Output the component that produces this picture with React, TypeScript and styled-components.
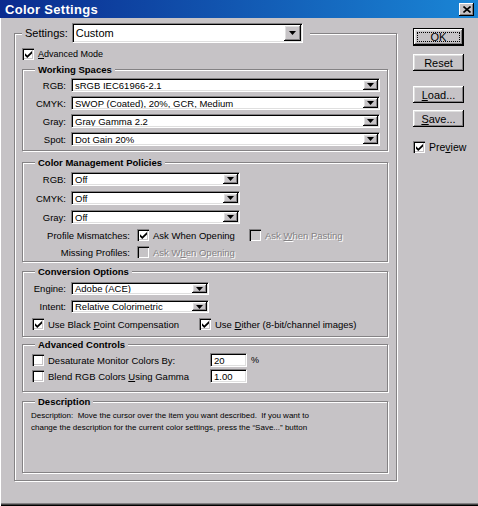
import React from 'react';
import styled, { createGlobalStyle, css } from 'styled-components';

const FACE = '#c6c3c6';
const SHADOW = '#848284';
const UI_FONT = `"Liberation Sans", Arial, sans-serif`;

const GlobalStyle = createGlobalStyle`
  html, body {
    margin: 0;
    padding: 0;
    background: ${FACE};
  }
  body {
    font-family: ${UI_FONT};
    color: #000;
  }
  * {
    box-sizing: border-box;
  }
`;

const Window = styled.div`
  width: 478px;
  height: 506px;
  background: ${FACE};
  display: flex;
  flex-direction: column;
  box-shadow: inset 0 -1px 0 #000, inset 0 -2px 0 #424142, inset 0 -3px 0 ${SHADOW};
`;

const TitleBar = styled.div`
  height: 18px;
  flex: none;
  display: flex;
  align-items: center;
  justify-content: space-between;
  padding: 0 4px 0 5px;
  background: linear-gradient(90deg, #0a2a8e 0%, #1a86d6 100%);
`;

const Title = styled.span`
  color: #fff;
  font-weight: bold;
  font-size: 13px;
  letter-spacing: 0.3px;
`;

const CloseButton = styled.div`
  width: 15px;
  height: 13px;
  background: ${FACE};
  display: flex;
  align-items: center;
  justify-content: center;
  box-shadow: inset -1px -1px 0 #000, inset 1px 1px 0 #fff, inset -2px -2px 0 ${SHADOW};
`;

const Body = styled.div`
  flex: 1;
  display: flex;
  align-items: flex-start;
  gap: 16px;
  padding: 5px 0 0 13px;
  border-left: 1px solid #fff;
`;

const etched = css`
  margin: 0;
  border: 1px solid ${SHADOW};
  box-shadow: 1px 1px 0 #fff, inset 1px 1px 0 #fff;
`;

const OuterGroup = styled.fieldset`
  ${etched};
  width: 383px;
  height: 458px;
  padding: 5px 8px 7px 7px;
  display: flex;
  flex-direction: column;
  gap: 4px;
`;

const SettingsLegend = styled.legend`
  padding: 0 7px 0 3px;
  display: flex;
  align-items: center;
  gap: 4px;
  background: ${FACE};
  font-size: 11px;
`;

const Group = styled.fieldset<{ $pt: number; $pb: number; $gap: number; $mt?: number; $grow?: boolean }>`
  ${etched};
  margin-top: ${p => p.$mt ?? 0}px;
  padding: ${p => p.$pt}px 7px ${p => p.$pb}px 7px;
  display: flex;
  flex-direction: column;
  gap: ${p => p.$gap}px;
  ${p => p.$grow && css`flex: 1;`}
`;

const GroupTitle = styled.legend`
  margin-left: 5px;
  padding: 0 3px;
  background: ${FACE};
  font-weight: bold;
  font-size: 9.5px;
  line-height: 11px;
`;

const Row = styled.div<{ $indent?: number }>`
  display: flex;
  align-items: center;
  padding-left: ${p => p.$indent ?? 0}px;
`;

const FieldLabel = styled.span<{ $w: number; $gap?: number }>`
  width: ${p => p.$w}px;
  flex: none;
  margin-right: ${p => p.$gap ?? 5}px;
  text-align: right;
  font-size: 9.5px;
  white-space: nowrap;
`;

const sunken = css`
  background: #fff;
  border-top: 1px solid ${SHADOW};
  border-left: 1px solid ${SHADOW};
  border-right: 1px solid #fff;
  border-bottom: 1px solid #fff;
  box-shadow: inset 1px 1px 0 #000, inset -1px -1px 0 #dfdfdf;
`;

const raised = css`
  background: ${FACE};
  box-shadow: inset -1px -1px 0 #000, inset 1px 1px 0 #fff, inset -2px -2px 0 ${SHADOW}, inset 2px 2px 0 #dfdfdf;
`;

const SelectBox = styled.div<{ $w?: number; $h?: number }>`
  ${sunken};
  display: flex;
  height: ${p => p.$h ?? 14}px;
  padding: 1px;
  ${p => (p.$w ? css`width: ${p.$w}px; flex: none;` : css`flex: 1;`)}
`;

const SelectText = styled.span<{ $size?: number }>`
  flex: 1;
  display: flex;
  align-items: center;
  padding-left: 2px;
  font-size: ${p => p.$size ?? 9.5}px;
  white-space: nowrap;
  overflow: hidden;
`;

const SelectArrow = styled.span<{ $w?: number }>`
  ${raised};
  width: ${p => p.$w ?? 15}px;
  flex: none;
  display: flex;
  align-items: center;
  justify-content: center;
`;

const Box = styled.span<{ $disabled?: boolean }>`
  width: 12px;
  height: 12px;
  flex: none;
  display: flex;
  align-items: center;
  justify-content: center;
  background: ${p => (p.$disabled ? FACE : '#fff')};
  box-shadow: inset 1px 1px 0 ${SHADOW}, inset 2px 2px 0 #000, inset -1px -1px 0 #fff, inset -2px -2px 0 ${FACE};
`;

const CheckItem = styled.span<{ $w?: number; $disabled?: boolean; $size?: number }>`
  display: flex;
  align-items: center;
  gap: 4px;
  flex: none;
  width: ${p => (p.$w ? `${p.$w}px` : 'auto')};
  font-size: ${p => p.$size ?? 9.5}px;
  white-space: nowrap;
  color: ${p => (p.$disabled ? SHADOW : '#000')};
  text-shadow: ${p => (p.$disabled ? '1px 1px 0 #fff' : 'none')};
`;

const NumberField = styled.div`
  ${sunken};
  width: 37px;
  height: 14px;
  display: flex;
  align-items: center;
  padding-left: 3px;
  font-size: 9.5px;
`;

const Unit = styled.span`
  margin-left: 4px;
  font-size: 9px;
`;

const DescText = styled.p`
  margin: 3px 0 0 1px;
  font-size: 8px;
  line-height: 12px;
`;

const Side = styled.div`
  width: 51px;
  display: flex;
  flex-direction: column;
  padding-top: 5px;
`;

const Button = styled.div<{ $mt?: number; $h?: number; $primary?: boolean }>`
  ${raised};
  margin-top: ${p => p.$mt ?? 0}px;
  height: ${p => p.$h ?? 17}px;
  display: flex;
  align-items: center;
  justify-content: center;
  font-size: 11px;
  ${p =>
    p.$primary &&
    css`
      border: 1px solid #000;
      padding: 3px;
    `}
`;

const FocusRing = styled.span`
  flex: 1;
  align-self: stretch;
  display: flex;
  align-items: center;
  justify-content: center;
  border: 1px dotted #000;
`;

const SideCheck = styled.div`
  margin-top: 14px;
`;

const Arrow = () => (
  <svg width="7" height="4" viewBox="0 0 7 4">
    <polygon points="0,0 7,0 3.5,4" fill="#000" />
  </svg>
);

const CheckMark = () => (
  <svg width="7" height="7" viewBox="0 0 7 7">
    <path d="M0 2.2 L2.3 4.4 L7 0 L7 2.6 L2.3 7 L0 4.8 Z" fill="#000" />
  </svg>
);

const Check: React.FC<{ on?: boolean; disabled?: boolean }> = ({ on, disabled }) => (
  <Box $disabled={disabled}>{on && <CheckMark />}</Box>
);

const Select: React.FC<{ value: string; w?: number; h?: number; size?: number; arrowW?: number }> = ({
  value,
  w,
  h,
  size,
  arrowW,
}) => (
  <SelectBox $w={w} $h={h}>
    <SelectText $size={size}>{value}</SelectText>
    <SelectArrow $w={arrowW}>
      <Arrow />
    </SelectArrow>
  </SelectBox>
);

export default function App() {
  return (
    <>
      <GlobalStyle />
      <Window>
        <TitleBar>
          <Title>Color Settings</Title>
          <CloseButton>
            <svg width="8" height="7" viewBox="0 0 8 7">
              <path d="M0.5 0.5 L7.5 6.5 M7.5 0.5 L0.5 6.5" stroke="#000" strokeWidth="1.6" />
            </svg>
          </CloseButton>
        </TitleBar>

        <Body>
          <OuterGroup>
            <SettingsLegend>
              <span>Settings:</span>
              <Select value="Custom" w={231} h={20} size={11} arrowW={17} />
            </SettingsLegend>

            <Row>
              <CheckItem $size={9}>
                <Check on />
                <span>
                  <u>A</u>dvanced Mode
                </span>
              </CheckItem>
            </Row>

            <Group $pt={3} $pb={4} $gap={4}>
              <GroupTitle>Working Spaces</GroupTitle>
              <Row>
                <FieldLabel $w={36}>RGB:</FieldLabel>
                <Select value="sRGB IEC61966-2.1" />
              </Row>
              <Row>
                <FieldLabel $w={36}>CMYK:</FieldLabel>
                <Select value="SWOP (Coated), 20%, GCR, Medium" />
              </Row>
              <Row>
                <FieldLabel $w={36}>Gray:</FieldLabel>
                <Select value="Gray Gamma 2.2" />
              </Row>
              <Row>
                <FieldLabel $w={36}>Spot:</FieldLabel>
                <Select value="Dot Gain 20%" />
              </Row>
            </Group>

            <Group $pt={4} $pb={3} $gap={5} $mt={2}>
              <GroupTitle>Color Management Policies</GroupTitle>
              <Row>
                <FieldLabel $w={36}>RGB:</FieldLabel>
                <Select value="Off" w={169} />
              </Row>
              <Row>
                <FieldLabel $w={36}>CMYK:</FieldLabel>
                <Select value="Off" w={169} />
              </Row>
              <Row>
                <FieldLabel $w={36}>Gray:</FieldLabel>
                <Select value="Off" w={169} />
              </Row>
              <Row>
                <FieldLabel $w={100} $gap={7}>
                  Profile Mismatches:
                </FieldLabel>
                <CheckItem $w={112}>
                  <Check on />
                  <span>Ask When Opening</span>
                </CheckItem>
                <CheckItem $disabled>
                  <Check disabled />
                  <span>
                    Ask <u>W</u>hen Pasting
                  </span>
                </CheckItem>
              </Row>
              <Row>
                <FieldLabel $w={100} $gap={7}>
                  Missing Profiles:
                </FieldLabel>
                <CheckItem $disabled>
                  <Check disabled />
                  <span>
                    Ask W<u>h</u>en Opening
                  </span>
                </CheckItem>
              </Row>
            </Group>

            <Group $pt={5} $pb={6} $gap={5}>
              <GroupTitle>Conversion Options</GroupTitle>
              <Row>
                <FieldLabel $w={36}>Engine:</FieldLabel>
                <Select value="Adobe (ACE)" w={138} h={13} />
              </Row>
              <Row>
                <FieldLabel $w={36}>Intent:</FieldLabel>
                <Select value="Relative Colorimetric" w={138} h={13} />
              </Row>
              <Row $indent={2}>
                <CheckItem $w={167}>
                  <Check on />
                  <span>
                    Use Black <u>P</u>oint Compensation
                  </span>
                </CheckItem>
                <CheckItem>
                  <Check on />
                  <span>
                    Use <u>D</u>ither (8-bit/channel images)
                  </span>
                </CheckItem>
              </Row>
            </Group>

            <Group $pt={3} $pb={8} $gap={2} $mt={-2}>
              <GroupTitle>Advanced Controls</GroupTitle>
              <Row $indent={2}>
                <CheckItem $w={178}>
                  <Check />
                  <span>Desaturate Monitor Colors By:</span>
                </CheckItem>
                <NumberField>20</NumberField>
                <Unit>%</Unit>
              </Row>
              <Row $indent={2}>
                <CheckItem $w={178}>
                  <Check />
                  <span>
                    Blend RGB Colors <u>U</u>sing Gamma
                  </span>
                </CheckItem>
                <NumberField>1.00</NumberField>
              </Row>
            </Group>

            <Group $pt={0} $pb={4} $gap={0} $grow>
              <GroupTitle>Description</GroupTitle>
              <DescText>
                Description:&nbsp; Move the cursor over the item you want described.&nbsp; If you want to
                <br />
                change the description for the current color settings, press the “Save...” button
              </DescText>
            </Group>
          </OuterGroup>

          <Side>
            <Button $primary $h={18}>
              <FocusRing>OK</FocusRing>
            </Button>
            <Button $mt={8}>Reset</Button>
            <Button $mt={15}>
              <span>
                <u>L</u>oad...
              </span>
            </Button>
            <Button $mt={7}>
              <span>
                <u>S</u>ave...
              </span>
            </Button>
            <SideCheck>
              <CheckItem $size={10.5}>
                <Check on />
                <span>
                  Pre<u>v</u>iew
                </span>
              </CheckItem>
            </SideCheck>
          </Side>
        </Body>
      </Window>
    </>
  );
}
